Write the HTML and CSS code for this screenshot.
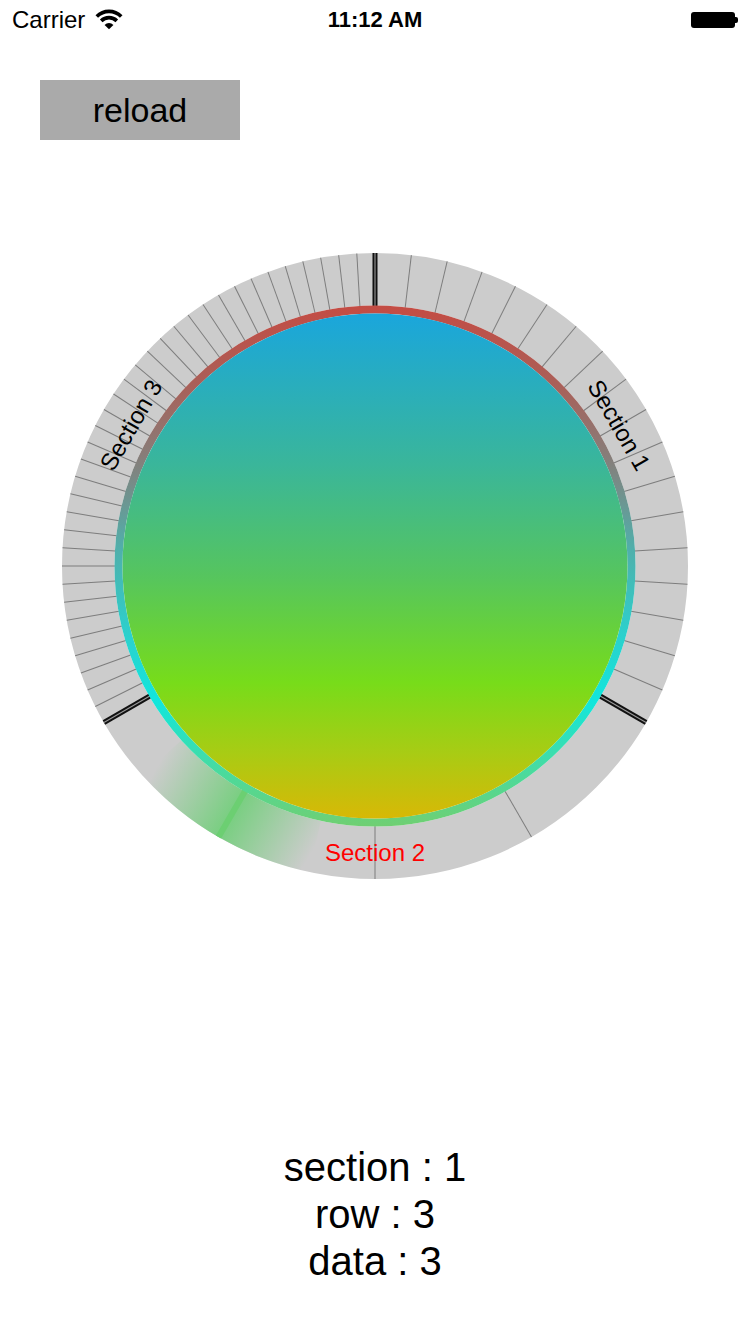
FILE: index.html
```html
<!DOCTYPE html>
<html>
<head>
<meta charset="utf-8">
<link rel="stylesheet" href="styles.css">
</head>
<body>
<div class="status">
  <div class="status-left">
    <span class="carrier">Carrier</span>
    <svg class="wifi" width="34" height="26" viewBox="0 0 26 20">
      <path d="M3.6 9.6 A13.3 13.3 0 0 1 22.4 9.6" fill="none" stroke="#000" stroke-width="2.8"/>
      <path d="M7 13 A8.5 8.5 0 0 1 19 13" fill="none" stroke="#000" stroke-width="2.8"/>
      <path d="M13 19.5 L9.6 16.1 A4.8 4.8 0 0 1 16.4 16.1 Z" fill="#000"/>
    </svg>
  </div>
  <div class="time">11:12 AM</div>
  <div class="status-right">
    <div class="battery"><div class="battery-body"></div><div class="battery-nub"></div></div>
  </div>
</div>

<button class="reload">reload</button>

<div class="wheel">
  <svg width="750" height="640" viewBox="0 0 750 640">
    <defs>
      <linearGradient id="ringGrad" gradientUnits="userSpaceOnUse" x1="0" y1="-260.5" x2="0" y2="260.5">
        <stop offset="0" stop-color="#c44c44"/>
        <stop offset="0.15" stop-color="#aa5f58"/>
        <stop offset="0.3" stop-color="#84807c"/>
        <stop offset="0.47" stop-color="#4fb0ac"/>
        <stop offset="0.63" stop-color="#2cd0cc"/>
        <stop offset="0.76" stop-color="#12e6dc"/>
        <stop offset="0.89" stop-color="#48dba0"/>
        <stop offset="1" stop-color="#70cf72"/>
      </linearGradient>
      <linearGradient id="fillGrad" gradientUnits="userSpaceOnUse" x1="0" y1="-252.5" x2="0" y2="252.5">
        <stop offset="0" stop-color="#1aa6dc"/>
        <stop offset="0.3" stop-color="#3ab69a"/>
        <stop offset="0.52" stop-color="#56c55e"/>
        <stop offset="0.73" stop-color="#77dc1a"/>
        <stop offset="0.87" stop-color="#a8cc14"/>
        <stop offset="1" stop-color="#d8b806"/>
      </linearGradient>
      <linearGradient id="hiGrad" gradientUnits="userSpaceOnUse" x1="-59.5" y1="279.8" x2="-212.5" y2="191.4">
        <stop offset="0" stop-color="#6fcf78" stop-opacity="0"/>
        <stop offset="0.5" stop-color="#6fcf78" stop-opacity="0.9"/>
        <stop offset="1" stop-color="#6fcf78" stop-opacity="0"/>
      </linearGradient>
      <line id="tick" x1="0" y1="-260" x2="0" y2="-313" stroke="#7d7d7d" stroke-width="1"/>
      <g id="sep">
        <line x1="0" y1="-258" x2="0" y2="-313" stroke="#111" stroke-width="5"/>
        <line x1="0" y1="-258" x2="0" y2="-313" stroke="#9a9a9a" stroke-width="1.1"/>
      </g>
    </defs>
    <g transform="translate(375,320)">
      <circle r="286.75" fill="none" stroke="#cccccc" stroke-width="52.5"/>

      <!-- Section 1 ticks -->
      <use href="#tick" transform="rotate(6.667)"/>
      <use href="#tick" transform="rotate(13.333)"/>
      <use href="#tick" transform="rotate(20)"/>
      <use href="#tick" transform="rotate(26.667)"/>
      <use href="#tick" transform="rotate(33.333)"/>
      <use href="#tick" transform="rotate(40)"/>
      <use href="#tick" transform="rotate(46.667)"/>
      <use href="#tick" transform="rotate(53.333)"/>
      <use href="#tick" transform="rotate(60)"/>
      <use href="#tick" transform="rotate(66.667)"/>
      <use href="#tick" transform="rotate(73.333)"/>
      <use href="#tick" transform="rotate(80)"/>
      <use href="#tick" transform="rotate(86.667)"/>
      <use href="#tick" transform="rotate(93.333)"/>
      <use href="#tick" transform="rotate(100)"/>
      <use href="#tick" transform="rotate(106.667)"/>
      <use href="#tick" transform="rotate(113.333)"/>

      <!-- Section 2 ticks -->
      <use href="#tick" transform="rotate(150)"/>
      <use href="#tick" transform="rotate(180)"/>

      <!-- Section 3 ticks -->
      <use href="#tick" transform="rotate(243.333)"/>
      <use href="#tick" transform="rotate(246.667)"/>
      <use href="#tick" transform="rotate(250)"/>
      <use href="#tick" transform="rotate(253.333)"/>
      <use href="#tick" transform="rotate(256.667)"/>
      <use href="#tick" transform="rotate(260)"/>
      <use href="#tick" transform="rotate(263.333)"/>
      <use href="#tick" transform="rotate(266.667)"/>
      <use href="#tick" transform="rotate(270)"/>
      <use href="#tick" transform="rotate(273.333)"/>
      <use href="#tick" transform="rotate(276.667)"/>
      <use href="#tick" transform="rotate(280)"/>
      <use href="#tick" transform="rotate(283.333)"/>
      <use href="#tick" transform="rotate(286.667)"/>
      <use href="#tick" transform="rotate(290)"/>
      <use href="#tick" transform="rotate(293.333)"/>
      <use href="#tick" transform="rotate(296.667)"/>
      <use href="#tick" transform="rotate(300)"/>
      <use href="#tick" transform="rotate(303.333)"/>
      <use href="#tick" transform="rotate(306.667)"/>
      <use href="#tick" transform="rotate(310)"/>
      <use href="#tick" transform="rotate(313.333)"/>
      <use href="#tick" transform="rotate(316.667)"/>
      <use href="#tick" transform="rotate(320)"/>
      <use href="#tick" transform="rotate(323.333)"/>
      <use href="#tick" transform="rotate(326.667)"/>
      <use href="#tick" transform="rotate(330)"/>
      <use href="#tick" transform="rotate(333.333)"/>
      <use href="#tick" transform="rotate(336.667)"/>
      <use href="#tick" transform="rotate(340)"/>
      <use href="#tick" transform="rotate(343.333)"/>
      <use href="#tick" transform="rotate(346.667)"/>
      <use href="#tick" transform="rotate(350)"/>
      <use href="#tick" transform="rotate(353.333)"/>
      <use href="#tick" transform="rotate(356.667)"/>

      <!-- selection highlight -->
      <path d="M-65.08 306.16 A313 313 0 0 1 -232.6 209.4 L-193.6 174.3 A260.5 260.5 0 0 0 -54.16 254.81 Z" fill="url(#hiGrad)"/>
      <line x1="0" y1="-254" x2="0" y2="-313" stroke="#6ccf72" stroke-width="6" transform="rotate(210)"/>

      <!-- section separators -->
      <use href="#sep" transform="rotate(0)"/>
      <use href="#sep" transform="rotate(120)"/>
      <use href="#sep" transform="rotate(240)"/>

      <!-- ring and disc -->
      <circle r="256.5" fill="none" stroke="url(#ringGrad)" stroke-width="8"/>
      <circle r="252.5" fill="url(#fillGrad)"/>

      <!-- labels -->
      <text class="label" transform="rotate(60) translate(0,-282)" text-anchor="middle" dominant-baseline="central">Section 1</text>
      <text class="label" transform="rotate(300) translate(0,-282)" text-anchor="middle" dominant-baseline="central">Section 3</text>
      <text class="label label-active" x="0" y="286" text-anchor="middle" dominant-baseline="central">Section 2</text>
    </g>
  </svg>
</div>

<div class="info">
  <div class="info-line">section : 1</div>
  <div class="info-line">row : 3</div>
  <div class="info-line">data : 3</div>
</div>
</body>
</html>
```

FILE: styles.css
```css
html, body {
  margin: 0;
  padding: 0;
  background: #ffffff;
}

body {
  width: 750px;
  font-family: "Liberation Sans", Arial, sans-serif;
  color: #000;
}

.status {
  height: 40px;
  display: grid;
  grid-template-columns: 1fr auto 1fr;
  align-items: center;
}

.status-left {
  display: flex;
  align-items: center;
  padding-left: 12px;
  gap: 7px;
}

.carrier {
  font-size: 24px;
  line-height: 40px;
}

.wifi {
  display: block;
  margin-bottom: 6px;
}

.time {
  font-size: 22px;
  font-weight: bold;
  line-height: 40px;
}

.status-right {
  display: flex;
  justify-content: flex-end;
  padding-right: 12px;
}

.battery {
  display: flex;
  align-items: center;
}

.battery-body {
  width: 44px;
  height: 16px;
  background: #000;
  border-radius: 3px;
}

.battery-nub {
  width: 3px;
  height: 6px;
  background: #000;
  border-radius: 0 2px 2px 0;
}

.reload {
  display: flex;
  align-items: center;
  justify-content: center;
  width: 200px;
  height: 60px;
  margin: 40px 0 0 40px;
  padding: 0;
  border: none;
  border-radius: 0;
  background: #aaaaaa;
  font-family: "Liberation Sans", Arial, sans-serif;
  font-size: 34px;
  color: #000;
}

.wheel {
  margin-top: 106px;
  height: 640px;
}

.wheel svg {
  display: block;
}

.label {
  font-family: "Liberation Sans", Arial, sans-serif;
  font-size: 24px;
  fill: #000;
}

.label-active {
  fill: #ff0000;
}

.info {
  margin-top: 258px;
  display: flex;
  flex-direction: column;
  align-items: center;
}

.info-line {
  font-size: 40px;
  line-height: 47px;
}
```
